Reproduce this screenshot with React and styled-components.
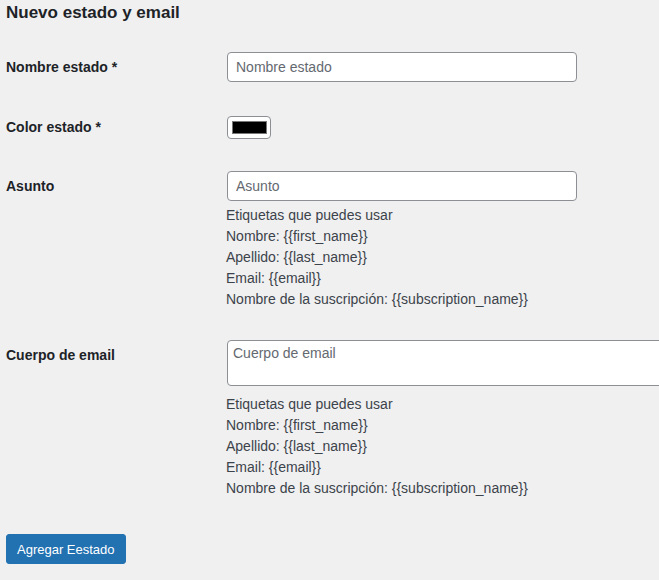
import React from "react";
import styled, { createGlobalStyle } from "styled-components";

const Global = createGlobalStyle`
  body {
    margin: 0;
    background: #f0f0f1;
    font-family: "Liberation Sans", Arial, sans-serif;
    font-size: 14px;
    color: #3c434a;
  }
`;

const Page = styled.div`
  padding: 0 0 40px 6px;
  overflow: hidden;
`;

const Title = styled.h2`
  margin: 0;
  font-size: 17px;
  line-height: 26px;
  font-weight: 700;
  color: #1d2327;
`;

const Row = styled.div`
  display: flex;
  align-items: flex-start;
  margin-top: ${(p) => p.$gap}px;
`;

const Label = styled.label`
  flex: 0 0 221px;
  padding-top: ${(p) => p.$offset}px;
  font-weight: 700;
  line-height: 18px;
  color: #1d2327;
`;

const Field = styled.div`
  display: flex;
  flex-direction: column;
  align-items: flex-start;
  min-width: 0;
`;

const TextInput = styled.input`
  box-sizing: border-box;
  width: 350px;
  height: 30px;
  margin: 0;
  padding: 0 8px;
  border: 1px solid #8c8f94;
  border-radius: 4px;
  background: #fff;
  font: inherit;
  color: #2c3338;
  &::placeholder {
    color: #646970;
  }
`;

const TextArea = styled.textarea`
  box-sizing: border-box;
  display: block;
  width: 460px;
  height: 46px;
  margin: 0;
  padding: 3px 5px;
  border: 1px solid #8c8f94;
  border-radius: 4px;
  background: #fff;
  font: inherit;
  line-height: 18px;
  resize: none;
  &::placeholder {
    color: #646970;
  }
`;

const ColorBox = styled.button`
  box-sizing: border-box;
  width: 44px;
  height: 23px;
  margin: 0;
  padding: 0;
  display: flex;
  align-items: center;
  justify-content: center;
  border: 1px solid #8c8f94;
  border-radius: 4px;
  background: #fff;
`;

const Swatch = styled.span`
  box-sizing: border-box;
  width: 35px;
  height: 13px;
  border: 1px solid #777;
  background: ${(p) => p.$color};
`;

const Desc = styled.div`
  margin-top: ${(p) => p.$gap}px;
  margin-left: -1px;
  line-height: 21px;
  white-space: nowrap;
`;

const Button = styled.button`
  box-sizing: border-box;
  margin-top: 35px;
  height: 30px;
  padding: 0 10px;
  border: 1px solid #2271b1;
  border-radius: 3px;
  background: #2271b1;
  color: #fff;
  font: inherit;
  font-size: 13px;
`;

const Tags = ({ gap }) => (
  <Desc $gap={gap}>
    Etiquetas que puedes usar
    <br />
    Nombre: {"{{first_name}}"}
    <br />
    Apellido: {"{{last_name}}"}
    <br />
    Email: {"{{email}}"}
    <br />
    Nombre de la suscripción: {"{{subscription_name}}"}
  </Desc>
);

export default function App() {
  return (
    <Page>
      <Global />
      <Title>Nuevo estado y email</Title>
      <Row $gap={26}>
        <Label $offset={6}>Nombre estado *</Label>
        <Field>
          <TextInput placeholder="Nombre estado" />
        </Field>
      </Row>
      <Row $gap={34}>
        <Label $offset={2}>Color estado *</Label>
        <Field>
          <ColorBox>
            <Swatch $color="#000" />
          </ColorBox>
        </Field>
      </Row>
      <Row $gap={32}>
        <Label $offset={6}>Asunto</Label>
        <Field>
          <TextInput placeholder="Asunto" />
          <Tags gap={4} />
        </Field>
      </Row>
      <Row $gap={30}>
        <Label $offset={6}>Cuerpo de email</Label>
        <Field>
          <TextArea placeholder="Cuerpo de email" />
          <Tags gap={8} />
        </Field>
      </Row>
      <Button>Agregar Eestado</Button>
    </Page>
  );
}
